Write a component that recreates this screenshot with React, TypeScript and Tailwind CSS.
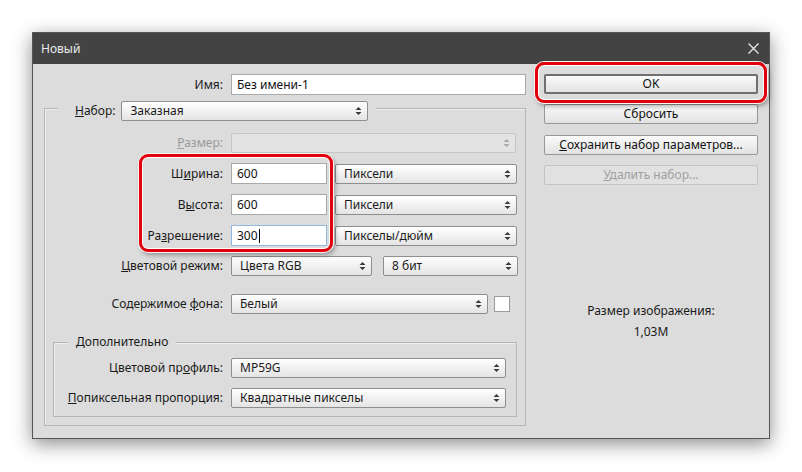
import React from "react";

const FONT = { fontFamily: '"Noto Sans", "Liberation Sans", sans-serif' };

function Arrows({ color = "#3a3a3a" }: { color?: string }) {
  return (
    <svg width="7" height="10" viewBox="0 0 7 10" className="shrink-0">
      <path d="M0.5 4 L3.5 1 L6.5 4 Z M0.5 6 L3.5 9 L6.5 6 Z" fill={color} />
    </svg>
  );
}

function Select({ cls, text, disabled }: { cls: string; text?: string; disabled?: boolean }) {
  return (
    <div
      className={`${cls} h-[20px] shrink-0 flex items-center justify-between pl-[8px] pr-[5px] rounded-[2px] border ${
        disabled
          ? "border-[#c6c6c6] bg-[#e3e3e3]"
          : "border-[#8e8e8e] bg-linear-to-b from-[#ffffff] to-[#e4e4e4]"
      }`}
    >
      <span className="text-[#1c1c1c] whitespace-nowrap">{text ?? ""}</span>
      <Arrows color={disabled ? "#a8a8a8" : "#3a3a3a"} />
    </div>
  );
}

function Input({ cls, text, focused, caret }: { cls: string; text: string; focused?: boolean; caret?: boolean }) {
  return (
    <div
      className={`${cls} h-[21px] shrink-0 flex items-center pl-[5px] bg-white border ${
        focused ? "border-[#8fb7e0]" : "border-[#a9a9a9]"
      }`}
    >
      <span className="text-[#111]">{text}</span>
      {caret && <span className="w-px h-[14px] bg-black ml-px" />}
    </div>
  );
}

function Button({ children, def, disabled }: { children: React.ReactNode; def?: boolean; disabled?: boolean }) {
  return (
    <div
      className={`h-[20px] w-full flex items-center justify-center rounded-[2px] ${
        def
          ? "border-2 border-[#6f6f6f] bg-linear-to-b from-[#fbfbfb] to-[#e2e2e2] text-[#111]"
          : disabled
          ? "border border-[#c4c4c4] bg-[#e1e1e1] text-[#a0a0a0]"
          : "border border-[#979797] bg-linear-to-b from-[#fbfbfb] to-[#e2e2e2] text-[#111]"
      }`}
    >
      {children}
    </div>
  );
}

export default function App() {
  return (
    <div
      className="relative w-[802px] h-[472px] bg-white pt-[32px] pl-[32px] text-[12px] leading-[16px] text-[#1a1a1a]"
      style={FONT}
    >
      {/* Dialog */}
      <div className="w-[738px] h-[407px] flex flex-col border border-[#555] bg-[#dcdcdc] shadow-[0_5px_18px_rgba(0,0,0,0.45)]">
        {/* Title bar */}
        <div className="h-[31px] shrink-0 bg-[#434343] flex items-center justify-between pl-[8px] pr-[10px]">
          <span className="text-[#ececec]">Новый</span>
          <svg width="11" height="11" viewBox="0 0 11 11">
            <path d="M0.5 0.5 L10.5 10.5 M10.5 0.5 L0.5 10.5" stroke="#e8e8e8" strokeWidth="1.3" />
          </svg>
        </div>

        {/* Body */}
        <div className="flex flex-1 pt-[10px]">
          {/* Left column */}
          <div className="w-[493px] shrink-0 flex flex-col">
            {/* Name */}
            <div className="flex items-center gap-[8px]">
              <span className="w-[190px] shrink-0 text-right">Имя:</span>
              <Input cls="w-[295px]" text="Без имени-1" />
            </div>

            {/* Group 1 */}
            <div className="mt-[13px] ml-[11px] w-[482px] border border-[#b6b6b6] shadow-[inset_1px_1px_0_#eeeeee] pb-[8px]">
              {/* legend */}
              <div className="-mt-[8px] ml-[13px] w-fit h-[20px] flex items-center bg-[#dcdcdc] pl-[17px] pr-[8px] gap-[6px]">
                <span>
                  <u>Н</u>абор:
                </span>
                <Select cls="w-[247px]" text="Заказная" />
              </div>

              <div className="mt-[12px] flex items-center gap-[8px]">
                <span className="w-[178px] shrink-0 text-right text-[#9a9a9a]">
                  <u>Р</u>азмер:
                </span>
                <Select cls="w-[285px]" disabled />
              </div>

              <div className="mt-[10px] flex items-center gap-[8px]">
                <span className="w-[178px] shrink-0 text-right">
                  Ш<u>и</u>рина:
                </span>
                <Input cls="w-[96px]" text="600" />
                <Select cls="w-[182px]" text="Пиксели" />
              </div>

              <div className="mt-[10px] flex items-center gap-[8px]">
                <span className="w-[178px] shrink-0 text-right">
                  В<u>ы</u>сота:
                </span>
                <Input cls="w-[96px]" text="600" />
                <Select cls="w-[182px]" text="Пиксели" />
              </div>

              <div className="mt-[10px] flex items-center gap-[8px]">
                <span className="w-[178px] shrink-0 text-right">
                  Ра<u>з</u>решение:
                </span>
                <Input cls="w-[96px]" text="300" focused caret />
                <Select cls="w-[182px]" text="Пикселы/дюйм" />
              </div>

              <div className="mt-[10px] flex items-center gap-[8px]">
                <span className="w-[178px] shrink-0 text-right">
                  <u>Ц</u>ветовой режим:
                </span>
                <Select cls="w-[141px]" text="Цвета RGB" />
                <Select cls="w-[135px] ml-[3px]" text="8 бит" />
              </div>

              <div className="mt-[18px] flex items-center gap-[8px]">
                <span className="w-[178px] shrink-0 text-right">
                  Содержимое <u>ф</u>она:
                </span>
                <Select cls="w-[257px]" text="Белый" />
                <div className="w-[16px] h-[16px] -ml-[2px] bg-white border border-[#9c9c9c]" />
              </div>

              {/* Group 2 */}
              <div className="mt-[28px] ml-[8px] w-[464px] border border-[#b6b6b6] shadow-[inset_1px_1px_0_#eeeeee] pb-[8px]">
                <div className="-mt-[9px] ml-[14px] w-fit h-[16px] flex items-center bg-[#dcdcdc] px-[8px]">
                  Дополнительно
                </div>
                <div className="mt-[8px] flex items-center gap-[8px]">
                  <span className="w-[169px] shrink-0 text-right">
                    Цветовой пр<u>о</u>филь:
                  </span>
                  <Select cls="w-[275px]" text="MP59G" />
                </div>
                <div className="mt-[10px] flex items-center gap-[8px]">
                  <span className="w-[169px] shrink-0 text-right">
                    <u>П</u>опиксельная пропорция:
                  </span>
                  <Select cls="w-[275px]" text="Квадратные пикселы" />
                </div>
              </div>
            </div>
          </div>

          {/* Right column */}
          <div className="ml-[18px] w-[214px] shrink-0 flex flex-col">
            <Button def>OK</Button>
            <div className="mt-[10px]">
              <Button>Сбросить</Button>
            </div>
            <div className="mt-[11px]">
              <Button>
                <span>
                  <u>С</u>охранить набор параметров...
                </span>
              </Button>
            </div>
            <div className="mt-[10px]">
              <Button disabled>
                <span>
                  <u>У</u>далить набор...
                </span>
              </Button>
            </div>
            <div className="mt-[118px] text-center">Размер изображения:</div>
            <div className="mt-[5px] text-center">1,03M</div>
          </div>
        </div>
      </div>

      {/* Red highlight overlays */}
      <div className="absolute left-[139px] top-[154px] w-[194px] h-[98px] rounded-[9px] border-[3px] border-[#e3000b] shadow-[inset_0_0_0_1px_#ffffff,0_0_0_1px_#f4f4f4,2px_3px_5px_rgba(0,0,0,0.35)]" />
      <div className="absolute left-[535px] top-[62px] w-[232px] h-[41px] rounded-[9px] border-[3px] border-[#e3000b] shadow-[inset_0_0_0_1px_#ffffff,0_0_0_1px_#f4f4f4,2px_3px_5px_rgba(0,0,0,0.35)]" />
    </div>
  );
}
